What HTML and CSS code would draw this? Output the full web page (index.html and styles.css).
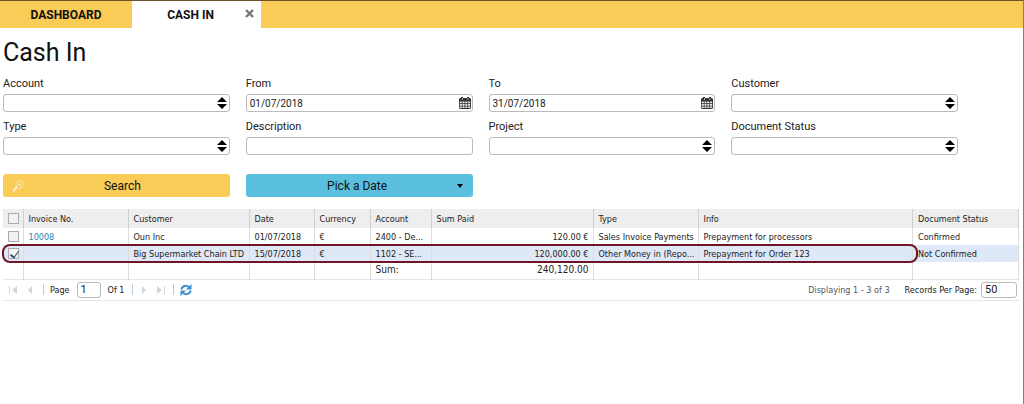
FILE: index.html
```
<!DOCTYPE html>
<html lang="en">
<head>
    <meta charset="UTF-8">
    <meta name="viewport" content="width=device-width, initial-scale=1.0">
    <title>Cash In</title>
    <link rel="stylesheet" href="styles.css">
</head>
<body>
    <svg class="sprite" aria-hidden="true">
        <symbol id="updown" viewBox="0 0 10 12">
            <path d="M5 0L10 5H0zM0 7H10L5 12z"/>
        </symbol>
        <symbol id="calendar" viewBox="0 0 12 12">
            <path fill="#333" d="M1 1h1V0h2v1h4V0h2v1h1l1 1v9l-1 1H1l-1-1V2z"/>
            <path fill="#fff" d="M3 1h.6v2H3zM8.600 1h.6v2h-.6z"/>
            <path fill="#eee" d="M.8 4.500h2v1.800h-2zm2.700 0h2v1.800h-2zm2.800 0h2v1.800h-2zm2.800 0h2v1.800h-2zM.8 7h2v1.700h-2zm2.700 0h2v1.700h-2zm2.800 0h2v1.700h-2zm2.800 0h2v1.700h-2zM.8 9.400h2v1.700h-2zm2.700 0h2v1.700h-2zm2.800 0h2v1.700h-2zm2.800 0h2v1.700h-2z"/>
        </symbol>
    </svg>

    <nav class="tabs">
        <a href="#" class="tab">DASHBOARD</a>
        <div class="tab active">
            <a href="#">CASH IN</a>
            <button class="tab-close" aria-label="Close tab">
                <svg width="9" height="9" viewBox="0 0 9 9"><path d="M1 1l7 7M8 1L1 8" stroke="#777" stroke-width="2.4"/></svg>
            </button>
        </div>
    </nav>

    <main>
        <h1>Cash In</h1>

        <form class="filters">
            <div class="field">
                <label for="account">Account</label>
                <div class="control">
                    <select id="account"><option></option></select>
                    <svg class="arrows"><use href="#updown"/></svg>
                </div>
            </div>
            <div class="field">
                <label for="from">From</label>
                <div class="control">
                    <input type="text" id="from" value="01/07/2018">
                    <svg class="calendar"><use href="#calendar"/></svg>
                </div>
            </div>
            <div class="field">
                <label for="to">To</label>
                <div class="control">
                    <input type="text" id="to" value="31/07/2018">
                    <svg class="calendar"><use href="#calendar"/></svg>
                </div>
            </div>
            <div class="field">
                <label for="customer">Customer</label>
                <div class="control">
                    <select id="customer"><option></option></select>
                    <svg class="arrows"><use href="#updown"/></svg>
                </div>
            </div>
            <div class="field">
                <label for="type">Type</label>
                <div class="control">
                    <select id="type"><option></option></select>
                    <svg class="arrows"><use href="#updown"/></svg>
                </div>
            </div>
            <div class="field">
                <label for="description">Description</label>
                <div class="control">
                    <input type="text" id="description">
                </div>
            </div>
            <div class="field">
                <label for="project">Project</label>
                <div class="control">
                    <select id="project"><option></option></select>
                    <svg class="arrows"><use href="#updown"/></svg>
                </div>
            </div>
            <div class="field">
                <label for="status">Document Status</label>
                <div class="control">
                    <select id="status"><option></option></select>
                    <svg class="arrows"><use href="#updown"/></svg>
                </div>
            </div>
            <button type="button" class="btn search-btn">
                <svg class="search-icon" viewBox="0 0 12 12" fill="none" stroke="#fdf0cf">
                    <circle cx="7.5" cy="4.5" r="3.5" stroke-dasharray="2 0.7"/>
                    <path d="M7.5 3v3M6 4.5h3" stroke-width="0.7"/>
                    <path d="M4.8 7.2L1 11" stroke-width="2"/>
                </svg>
                Search
            </button>
            <button type="button" class="btn date-btn">
                Pick a Date
                <svg class="caret" viewBox="0 0 6 4"><path d="M0 0h6L3 4z"/></svg>
            </button>
        </form>

        <div class="grid">
            <table>
                <colgroup>
                    <col class="col-check">
                    <col class="col-invoice">
                    <col class="col-customer">
                    <col class="col-date">
                    <col class="col-currency">
                    <col class="col-account">
                    <col class="col-sum">
                    <col class="col-type">
                    <col class="col-info">
                    <col class="col-status">
                </colgroup>
                <thead>
                    <tr>
                        <th><input type="checkbox" aria-label="Select all"></th>
                        <th>Invoice No.</th>
                        <th>Customer</th>
                        <th>Date</th>
                        <th>Currency</th>
                        <th>Account</th>
                        <th>Sum Paid</th>
                        <th>Type</th>
                        <th>Info</th>
                        <th>Document Status</th>
                    </tr>
                </thead>
                <tbody>
                    <tr>
                        <td><input type="checkbox" aria-label="Select 10008"></td>
                        <td><a href="#">10008</a></td>
                        <td>Oun Inc</td>
                        <td>01/07/2018</td>
                        <td>€</td>
                        <td>2400 - De...</td>
                        <td class="amount">120.00 €</td>
                        <td>Sales Invoice Payments</td>
                        <td>Prepayment for processors</td>
                        <td>Confirmed</td>
                    </tr>
                    <tr class="selected">
                        <td><input type="checkbox" aria-label="Select Big Supermarket Chain LTD" checked></td>
                        <td></td>
                        <td>Big Supermarket Chain LTD</td>
                        <td>15/07/2018</td>
                        <td>€</td>
                        <td>1102 - SE...</td>
                        <td class="amount">120,000.00 €</td>
                        <td>Other Money in (Repo...</td>
                        <td>Prepayment for Order 123</td>
                        <td>Not Confirmed</td>
                    </tr>
                </tbody>
                <tfoot>
                    <tr>
                        <td></td>
                        <td></td>
                        <td></td>
                        <td></td>
                        <td></td>
                        <td>Sum:</td>
                        <td class="amount">240,120.00</td>
                        <td></td>
                        <td></td>
                        <td></td>
                    </tr>
                </tfoot>
            </table>
            <div class="highlight"></div>
        </div>

        <div class="pager">
            <button class="page-btn" aria-label="First page" disabled>
                <svg width="9" height="8" viewBox="0 0 9 8"><path d="M0 0h1v8H0zM8 0v8L3 4z"/></svg>
            </button>
            <button class="page-btn" aria-label="Previous page" disabled>
                <svg width="9" height="8" viewBox="0 0 9 8"><path d="M6 0v8L2 4z"/></svg>
            </button>
            <span class="separator"></span>
            <label for="page">Page</label>
            <input type="text" id="page" value="1">
            <span class="page-total">Of 1</span>
            <span class="separator"></span>
            <button class="page-btn" aria-label="Next page" disabled>
                <svg width="9" height="8" viewBox="0 0 9 8"><path d="M3 0v8l4-4z"/></svg>
            </button>
            <button class="page-btn" aria-label="Last page" disabled>
                <svg width="9" height="8" viewBox="0 0 9 8"><path d="M1 0v8l5-4zM8 0h1v8H8z"/></svg>
            </button>
            <span class="separator"></span>
            <button class="refresh" aria-label="Refresh">
                <svg width="12" height="12" viewBox="0 0 12 12">
                    <path d="M1.5 5.5C2 1.500 7 .7 9 3.500M10.500 6.500C10 10.500 5 11.300 3 8.500" fill="none" stroke="#3c8fd0" stroke-width="2"/>
                    <path fill="#3c8fd0" d="M11.500 0v5.500H6zM.5 12V6.500H6z"/>
                </svg>
            </button>
            <span class="displaying">Displaying 1 - 3 of 3</span>
            <label for="per-page">Records Per Page:</label>
            <input type="text" id="per-page" value="50">
        </div>
    </main>
</body>
</html>
```
FILE: styles.css
```
* {
    box-sizing: border-box;
}
body {
    margin: 0;
    min-height: 100vh;
    border-top: 1px solid #6b5330;
    border-right: 1px solid #7f8084;
    background-color: white;
    font-family: Roboto, "Liberation Sans", sans-serif;
    font-size: 11px;
    color: #222;
}
button, input, select {
    margin: 0;
    padding: 0;
    font-family: inherit;
    color: inherit;
}
button {
    border: none;
    background: none;
    cursor: pointer;
}
a {
    color: inherit;
    text-decoration: none;
}
.sprite {
    position: absolute;
    width: 0;
    height: 0;
}

.tabs {
    display: flex;
    height: 27px;
    background-color: #f9cb57;
}
.tab {
    position: relative;
    display: flex;
    align-items: center;
    justify-content: center;
    width: 132px;
    font-size: 12px;
    font-weight: bold;
    color: #111;
}
.tab.active {
    width: 129px;
    padding-right: 12px;
    background-color: white;
}
.tab-close {
    position: absolute;
    top: 8px;
    right: 7px;
    display: flex;
}

main {
    padding: 0 4px 0 3px;
}
h1 {
    margin: 9px 0 8px;
    font-size: 25px;
    line-height: 32px;
    font-weight: normal;
    color: #111;
}

.filters {
    display: grid;
    grid-template-columns: repeat(4, 1fr);
    column-gap: 16px;
    margin-right: 61px;
}
.field {
    height: 43px;
}
.field label {
    display: block;
    height: 17px;
    line-height: 13px;
}
.control {
    position: relative;
}
.control input, .control select {
    display: block;
    width: 100%;
    height: 18px;
    padding: 0 3px;
    border: 1px solid #bbb;
    border-radius: 3px;
    background-color: white;
    font-size: 10px;
    appearance: none;
}
.arrows, .calendar {
    position: absolute;
    top: 3px;
    right: 3px;
    width: 10px;
    height: 12px;
    pointer-events: none;
}
.calendar {
    right: 2px;
    width: 12px;
}
.btn {
    position: relative;
    height: 23px;
    margin-top: 11px;
    border-radius: 3px;
    font-size: 12px;
    color: #111;
}
.search-btn {
    padding-left: 12px;
    background-color: #f9cb57;
}
.date-btn {
    padding-right: 4px;
    background-color: #5bc0de;
}
.search-icon {
    position: absolute;
    top: 6px;
    left: 9px;
    width: 12px;
    height: 12px;
}
.caret {
    position: absolute;
    top: 10px;
    right: 10px;
    width: 6px;
    height: 4px;
}

.grid {
    position: relative;
    margin-top: 12px;
    font-family: "DejaVu Sans Condensed", "DejaVu Sans", sans-serif;
}
table {
    width: 100%;
    table-layout: fixed;
    border-collapse: collapse;
    font-size: 9px;
    line-height: 12px;
}
th, td {
    height: 17px;
    padding: 0 4px 0 5px;
    border-right: 1px solid #ddd;
    text-align: left;
    font-weight: normal;
    white-space: nowrap;
    overflow: hidden;
}
th {
    height: 19px;
    background-color: #eee;
    border-right-color: #d0d0d0;
}
th:first-child, td:first-child {
    padding: 0 4px 0 5px;
}
tfoot tr {
    border-bottom: 1px solid #e5e5e5;
    font-size: 10px;
}
.col-check {
    width: 20px;
}
.col-invoice, .col-type {
    width: 105px;
}
.col-customer {
    width: 121px;
}
.col-date {
    width: 65px;
}
.col-currency {
    width: 56px;
}
.col-account {
    width: 61px;
}
.col-sum {
    width: 162px;
}
.col-status {
    width: 106px;
}
td a {
    color: #2d87b5;
}
.amount {
    text-align: right;
}
.selected {
    background-color: #dfe8f6;
}
input[type="checkbox"] {
    display: block;
    width: 11px;
    height: 11px;
    border: 1px solid #aaa;
    background-color: #f2f2f2;
    appearance: none;
}
input[type="checkbox"]:checked::before {
    content: "";
    display: block;
    width: 4px;
    height: 7px;
    margin-left: 3px;
    border: solid #36506f;
    border-width: 0 1px 2px 0;
    transform: rotate(35deg);
}
/* outline round the selected row */
.highlight {
    position: absolute;
    top: 35px;
    left: -1px;
    right: 101px;
    height: 19px;
    border: 2px solid #701526;
    border-radius: 8px;
    pointer-events: none;
}

.pager {
    display: flex;
    align-items: center;
    height: 21px;
    padding: 0 2px 0 6px;
    border-bottom: 1px solid #e5e5e5;
    font-family: "DejaVu Sans Condensed", "DejaVu Sans", sans-serif;
    font-size: 9px;
}
.page-btn {
    display: flex;
    margin-right: 8px;
    fill: #d5d5d5;
}
.separator {
    width: 1px;
    height: 11px;
    margin-right: 6px;
    background-color: #b5cbdc;
}
.pager input {
    height: 16px;
    border: 1px solid #bbb;
    border-radius: 3px;
    font-family: Roboto, "Liberation Sans", sans-serif;
    font-size: 11px;
}
#page {
    width: 24px;
    margin: 0 7px;
    padding-left: 3px;
}
#per-page {
    width: 36px;
    margin-left: 4px;
    padding-left: 3px;
}
.page-total {
    margin-right: 7px;
}
.refresh {
    display: flex;
}
.displaying {
    margin-left: auto;
    margin-right: 15px;
    color: #555;
}
```
